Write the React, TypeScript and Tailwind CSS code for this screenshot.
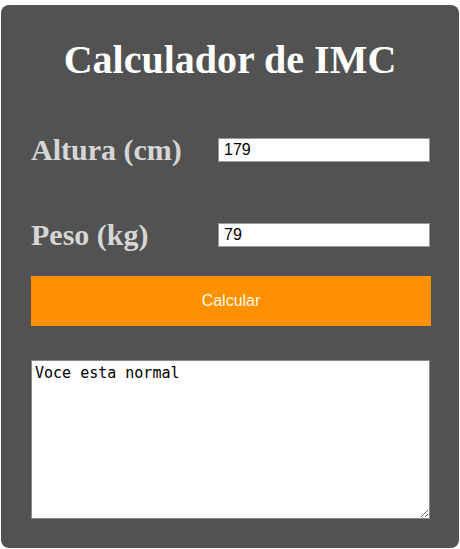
import React from "react";

export default function App() {
  return (
    <div className="bg-white w-[460px] h-[549px] pt-[5px] px-[1px]">
      <div className="bg-[#525252] rounded-[8px] h-[543px] px-[30px] flex flex-col">
        {/* Title */}
        <h1 className="mt-[31px] h-[48px] text-center text-white font-bold text-[40px] leading-[48px] font-['Liberation_Serif',serif]">
          Calculador de IMC
        </h1>

        {/* Altura */}
        <div className="mt-[48px] h-[36px] flex items-center justify-between">
          <label className="text-[#d6d6d6] font-bold text-[30px] leading-[36px] font-['Liberation_Serif',serif]">
            Altura (cm)
          </label>
          <input
            defaultValue="179"
            className="mr-[-1px] w-[212px] h-[24px] bg-white border border-[#9a9a9a] px-[5px] text-[16px] text-black font-['Liberation_Sans',sans-serif] outline-none"
          />
        </div>

        {/* Peso */}
        <div className="mt-[49px] h-[36px] flex items-center justify-between">
          <label className="text-[#d6d6d6] font-bold text-[30px] leading-[36px] font-['Liberation_Serif',serif]">
            Peso (kg)
          </label>
          <input
            defaultValue="79"
            className="mr-[-1px] w-[212px] h-[24px] bg-white border border-[#9a9a9a] px-[5px] text-[16px] text-black font-['Liberation_Sans',sans-serif] outline-none"
          />
        </div>

        {/* Button */}
        <button className="mt-[23px] h-[50px] w-[400px] bg-[#ff9100] text-[#fff8e6] text-[16px] font-['Liberation_Sans',sans-serif]">
          Calcular
        </button>

        {/* Result */}
        <textarea
          defaultValue="Voce esta normal"
          className="mt-[34px] w-[399px] h-[159px] bg-white border border-[#8a8a8a] px-[3px] py-[3px] text-[15px] leading-[18px] text-black font-['DejaVu_Sans_Mono',monospace] outline-none resize"
        />
      </div>
    </div>
  );
}
